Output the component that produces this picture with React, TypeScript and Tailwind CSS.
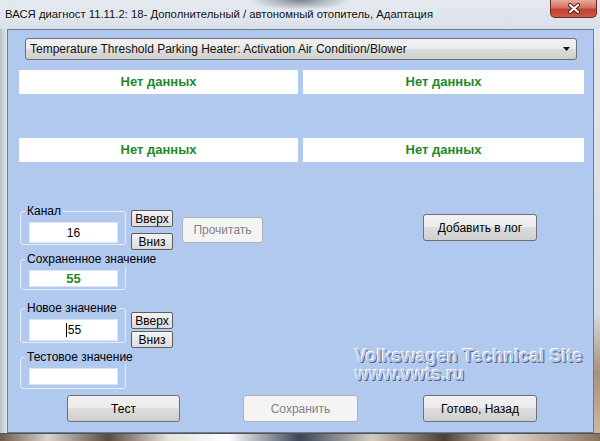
const btn =
  'flex items-center justify-center rounded-[3px] border border-[#707070] bg-[linear-gradient(#f2f2f2_0%,#ebebeb_50%,#dddddd_50%,#cfcfcf_100%)] text-[12px] text-black'
const btnOff =
  'flex items-center justify-center rounded-[3px] border border-[#adb2b5] bg-[#f4f4f4] text-[12px] text-[#838383]'
const spinBtn =
  'flex h-[17px] items-center justify-center rounded-[2px] border border-[#5e5e5e] bg-[linear-gradient(#f4f4f4,#dcdcdc)] text-[12px] text-black'
const field = 'flex items-center justify-center bg-white border border-[#dfe6ee]'

function Group({ label, pb, children }: { label: string; pb: string; children: React.ReactNode }) {
  return (
    <div className="flex w-[106px] flex-col">
      <span className="relative z-10 ml-[5px] self-start whitespace-nowrap bg-[#b1c9ee] px-[2px] text-[12px] leading-[14px] text-black">
        {label}
      </span>
      <div className={`-mt-[7px] rounded-[3px] border border-[#e4edf9] pl-[8px] pr-[7px] pt-[10px] ${pb}`}>
        {children}
      </div>
    </div>
  )
}

function Spin({ mt, gap }: { mt: string; gap: string }) {
  return (
    <div className={`ml-[5px] flex w-[42px] flex-col ${mt} ${gap}`}>
      <div className={spinBtn}>Вверх</div>
      <div className={spinBtn}>Вниз</div>
    </div>
  )
}

export default function App() {
  return (
    <div className="flex h-[441px] w-[600px] flex-col overflow-hidden bg-[#dfe5ec] font-['Liberation_Sans',Arial,sans-serif]">
      {/* title bar */}
      <div className="flex h-[29px] items-start justify-between bg-[radial-gradient(ellipse_50px_10px_at_300px_0px,#7a8592,transparent),linear-gradient(#e4e9ef,#d9e1ea)]">
        <span className="ml-[5px] mt-[7px] text-[11.3px] leading-[14px] text-[#111] [text-shadow:0_0_6px_#fff]">
          ВАСЯ диагност 11.11.2: 18- Дополнительный / автономный отопитель, Адаптация
        </span>
        <div className="mr-[3px] flex h-[18px] w-[47px] items-center justify-center rounded-b-[5px] border border-t-0 border-[#6b2b22] bg-[linear-gradient(#e7aa9c_0%,#d6705f_45%,#c2412f_55%,#c85a44_100%)]">
          <svg width="14" height="11" viewBox="0 0 14 11">
            <path d="M3 2 L11 9 M11 2 L3 9" stroke="#4a1a12" strokeWidth="4" strokeLinecap="round" />
            <path d="M3 2 L11 9 M11 2 L3 9" stroke="#fff" strokeWidth="2.2" strokeLinecap="round" />
          </svg>
        </div>
      </div>

      <div className="flex h-[404px]">
        <div className="w-[7px] bg-[linear-gradient(to_right,#b9c0c8,#e2e7ed)]" />

        {/* client */}
        <div className="flex w-[587px] flex-col border border-[#6f7c8a] bg-[#b1c9ee]">
          <div className="ml-[17px] mt-[8px] flex h-[22px] w-[552px] items-center justify-between rounded-[3px] border border-[#707070] bg-[linear-gradient(#f2f2f2_0%,#ebebeb_50%,#dddddd_50%,#cfcfcf_100%)] pl-[4px] pr-[6px] text-[12px] text-[#111]">
            <span>Temperature Threshold Parking Heater: Activation Air Condition/Blower</span>
            <svg width="7" height="4" viewBox="0 0 7 4">
              <path d="M0 0 H7 L3.5 4 Z" fill="#111" />
            </svg>
          </div>

          {[10, 44].map((mt) => (
            <div key={mt} className={`ml-[11px] flex h-[24px] gap-[5px] ${mt === 10 ? 'mt-[10px]' : 'mt-[44px]'}`}>
              <div className="flex w-[279px] items-center justify-center bg-white text-[13px] font-bold text-[#22892a]">
                Нет данных
              </div>
              <div className="flex w-[281px] items-center justify-center bg-white text-[13px] font-bold text-[#22892a]">
                Нет данных
              </div>
            </div>
          ))}

          <div className="mt-[42px] flex flex-col pl-[12px]">
            {/* Канал */}
            <div className="flex h-[46px] items-start">
              <Group label="Канал" pb="pb-[1px]">
                <div className={`${field} h-[21px] text-[12px]`}>16</div>
              </Group>
              <Spin mt="mt-[6px]" gap="gap-[6px]" />
              <div className={`${btnOff} ml-[9px] mt-[13px] h-[26px] w-[81px]`}>Прочитать</div>
              <div className={`${btn} ml-[160px] mt-[10px] h-[27px] w-[114px]`}>Добавить в лог</div>
            </div>

            {/* Сохраненное */}
            <div className="mt-[2px] flex">
              <Group label="Сохраненное значение" pb="pb-[2px]">
                <div className={`${field} h-[17px] text-[13px] font-bold text-[#22892a]`}>55</div>
              </Group>
            </div>

            {/* Новое */}
            <div className="mt-[11px] flex h-[48px] items-start">
              <Group label="Новое значение" pb="pb-[1px]">
                <div className={`${field} h-[22px] text-[12px]`}>
                  <span className="mr-[1px] h-[14px] w-px bg-black" />
                  55
                </div>
              </Group>
              <Spin mt="mt-[11px]" gap="gap-[2px]" />
            </div>

            {/* Тестовое */}
            <div className="mt-[1px] flex items-start">
              <Group label="Тестовое значение" pb="pb-[3px]">
                <div className={`${field} h-[17px]`} />
              </Group>
              <div className="-mt-[3px] ml-[229px] flex flex-col text-[18px] font-bold leading-[18px] text-[#b3c8eb] [text-shadow:-1px_-1px_0_#fff,1px_1px_0_#56647c]">
                <span>Volkswagen Technical Site</span>
                <span>www.vwts.ru</span>
              </div>
            </div>

            {/* bottom buttons */}
            <div className="mt-[6px] flex">
              <div className={`${btn} ml-[47px] h-[27px] w-[113px]`}>Тест</div>
              <div className={`${btnOff} ml-[63px] h-[27px] w-[115px]`}>Сохранить</div>
              <div className={`${btn} ml-[65px] h-[27px] w-[114px]`}>Готово, Назад</div>
            </div>
          </div>
        </div>

        <div className="w-[6px] bg-[linear-gradient(#e2e7ed_0%,#d6dce3_70%,#a89080_85%,#c9b8a6_100%)]" />
      </div>

      <div className="h-[8px] border-t border-[#4b5560] bg-[linear-gradient(to_right,#6e5a4c_0%,#d8d2cc_8%,#5a4c44_18%,#e6e0da_28%,#fff_38%,#3d4456_50%,#d4cbc2_62%,#4a3e36_74%,#e2d9cf_84%,#8a7260_100%)]" />
    </div>
  )
}
